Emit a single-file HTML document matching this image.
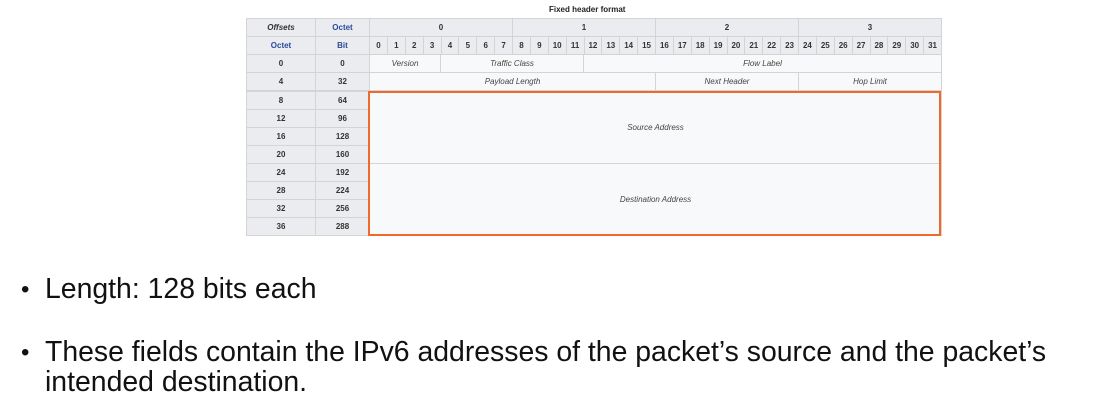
<!DOCTYPE html>
<html><head><meta charset="utf-8"><style>
body{margin:0;width:1111px;height:414px;background:#fff;position:relative;overflow:hidden;font-family:"Liberation Sans",sans-serif}
.c{position:absolute;box-sizing:border-box;border:1px solid #d4d4d4;font-size:8px;font-weight:bold;color:#333;display:flex;align-items:center;justify-content:center}
.g{background:#eaecf0}
.w{background:#f8f9fa;font-weight:normal;font-style:italic;color:#444}
.b{color:#2a4b9a}
.t{position:absolute;font-size:28.4px;color:#111;left:45px;line-height:30px}
.dot{position:absolute;left:21px;font-size:24px;color:#111;line-height:30px}
</style></head><body>
<div style="position:absolute;left:549px;top:5px;font-size:8px;font-weight:bold;color:#222">Fixed header format</div>
<div class="c g" style="left:246px;top:18px;width:70px;height:19px;font-style:italic">Offsets</div>
<div class="c g b" style="left:315px;top:18px;width:55px;height:19px">Octet</div>
<div class="c g b" style="left:246px;top:36px;width:70px;height:19px">Octet</div>
<div class="c g b" style="left:315px;top:36px;width:55px;height:19px">Bit</div>
<div class="c g" style="left:369px;top:18px;width:144px;height:19px">0</div>
<div class="c g" style="left:512px;top:18px;width:144px;height:19px">1</div>
<div class="c g" style="left:655px;top:18px;width:144px;height:19px">2</div>
<div class="c g" style="left:798px;top:18px;width:144px;height:19px">3</div>
<div id="bits"></div>
<div class="c w" style="left:369px;top:54px;width:72px;height:19px">Version</div>
<div class="c w" style="left:440px;top:54px;width:144px;height:19px">Traffic Class</div>
<div class="c w" style="left:583px;top:54px;width:359px;height:19px">Flow Label</div>
<div class="c w" style="left:369px;top:72px;width:287px;height:19px">Payload Length</div>
<div class="c w" style="left:655px;top:72px;width:144px;height:19px">Next Header</div>
<div class="c w" style="left:798px;top:72px;width:144px;height:19px">Hop Limit</div>
<div id="rows"></div>
<div class="c w" style="left:369px;top:91px;width:573px;height:73px">Source Address</div>
<div class="c w" style="left:369px;top:163px;width:573px;height:73px">Destination Address</div>
<div style="position:absolute;left:368px;top:91px;width:573px;height:145px;box-sizing:border-box;border:2px solid #f0692a"></div>
<div class="dot" style="top:275px">•</div>
<div class="t" style="top:274px">Length: 128 bits each</div>
<div class="dot" style="top:338px">•</div>
<div class="t" style="top:337px">These fields contain the IPv6 addresses of the packet’s source and the packet’s<br>intended destination.</div>
<script>
var h='';for(var i=0;i<32;i++){h+='<div class="c g" style="left:'+(369+i*17.875).toFixed(2)+'px;top:36px;width:18.9px;height:19px">'+i+'</div>';}
document.getElementById('bits').innerHTML=h;
var r='',a=[0,4,8,12,16,20,24,28,32,36];
for(var j=0;j<10;j++){var t=[54,72,91,109,127,145,163,181,199,217][j];
r+='<div class="c g" style="left:246px;top:'+t+'px;width:70px;height:19px">'+a[j]+'</div><div class="c g" style="left:315px;top:'+t+'px;width:55px;height:19px">'+(a[j]*8)+'</div>';}
document.getElementById('rows').innerHTML=r;
</script>
</body></html>
